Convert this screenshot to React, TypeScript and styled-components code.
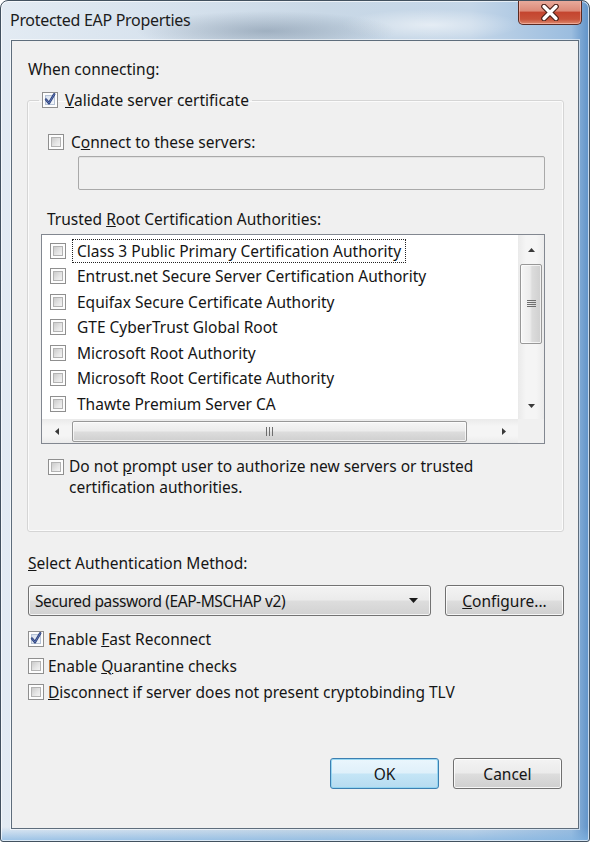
import React from "react";
import styled, { createGlobalStyle } from "styled-components";

const Global = createGlobalStyle`
  html, body { margin: 0; padding: 0; }
  body {
    width: 590px;
    height: 842px;
    overflow: hidden;
    background: #ffffff;
    font-family: "Noto Sans", "Open Sans", sans-serif;
  }
  * { box-sizing: border-box; }
`;

const FONT = `"Noto Sans", "Open Sans", "DejaVu Sans", sans-serif`;

const Window = styled.div`
  width: 590px;
  height: 842px;
  display: flex;
  flex-direction: column;
  border: 1px solid #42515f;
  border-radius: 8px 8px 3px 3px;
  box-shadow: inset 0 0 0 1px rgba(255, 255, 255, 0.65);
  background:
    radial-gradient(ellipse 130px 20px at 265px 30px, rgba(96, 116, 138, 0.42), transparent),
    radial-gradient(ellipse 90px 16px at 430px 24px, rgba(255, 255, 255, 0.55), transparent),
    linear-gradient(0deg, rgba(130, 180, 225, 0.75) 0, rgba(130, 180, 225, 0) 14px),
    linear-gradient(90deg, #e3ebf3 0%, #d8e3ee 25%, #c9d8e6 55%, #c4d6e8 80%, #9bbddf 97%, #5f92c8 100%);
  overflow: hidden;
`;

const TitleBar = styled.div`
  height: 39px;
  flex: none;
  display: flex;
  align-items: flex-start;
  justify-content: space-between;
`;

const Title = styled.div`
  margin: 9px 0 0 9px;
  font-family: ${FONT};
  font-size: 16px;
  line-height: 20px;
  color: #1c1c1c;
  letter-spacing: -0.3px;
`;

const CloseButton = styled.div`
  width: 64px;
  height: 25px;
  margin: -1px 7px 0 0;
  display: flex;
  align-items: center;
  justify-content: center;
  border: 1px solid #5b2a22;
  border-top: none;
  border-radius: 0 0 5px 5px;
  box-shadow: inset 0 0 0 1px rgba(255, 200, 190, 0.55);
  background: linear-gradient(180deg, #e9ad9f 0%, #dc8a78 45%, #c4452f 52%, #c8523a 80%, #dd8a6e 100%);
`;

const Client = styled.div`
  flex: 1;
  margin: 0 10px 12px 10px;
  border: 1px solid #5e6d7c;
  box-shadow: 0 0 0 1px rgba(255, 255, 255, 0.55);
  background: #f0f0f0;
  display: flex;
  flex-direction: column;
  font-family: ${FONT};
  font-size: 15.5px;
  color: #151515;
  letter-spacing: 0;
`;

const Label = styled.div<{ $left: number; $top: number }>`
  margin: ${(p) => p.$top}px 0 0 ${(p) => p.$left}px;
  line-height: 20px;
  height: 20px;
  white-space: nowrap;
`;

const Group = styled.fieldset`
  margin: 11px 0 0 15px;
  width: 537px;
  padding: 0 0 33px 0;
  border: 1px solid #d5d5d5;
  border-radius: 3px;
  box-shadow: inset 0 0 0 1px #fbfbfb;
  min-width: 0;
`;

const Legend = styled.legend`
  margin-left: 11px;
  padding: 0 3px;
  height: 20px;
  display: flex;
  align-items: center;
  gap: 7px;
  line-height: 20px;
  white-space: nowrap;
`;

const CheckRow = styled.div<{ $left: number; $top: number; $gap: number }>`
  margin: ${(p) => p.$top}px 0 0 ${(p) => p.$left}px;
  display: flex;
  align-items: center;
  gap: ${(p) => p.$gap}px;
  height: 20px;
  line-height: 20px;
  white-space: nowrap;
`;

const WrapRow = styled.div<{ $left: number; $top: number; $gap: number }>`
  margin: ${(p) => p.$top}px 0 0 ${(p) => p.$left}px;
  display: flex;
  align-items: flex-start;
  gap: ${(p) => p.$gap}px;
  line-height: 21px;
`;

const WrapText = styled.p`
  margin: 0;
  width: 440px;
`;

const BoxOuter = styled.div<{ $offset?: number }>`
  flex: none;
  width: 16px;
  height: 16px;
  margin-top: ${(p) => p.$offset ?? 0}px;
  border: 1px solid #8f8f8f;
  background: #fdfdfd;
  padding: 2px;
  display: flex;
`;

const BoxInner = styled.div<{ $checked?: boolean }>`
  flex: 1;
  border: 1px solid ${(p) => (p.$checked ? "#b5c2d6" : "#b3b3b3")};
  background: ${(p) =>
    p.$checked
      ? "linear-gradient(135deg, #d9e2ef 0%, #f3f6fa 100%)"
      : "linear-gradient(135deg, #cbcbcb 0%, #e6e6e6 60%, #f3f3f3 100%)"};
  position: relative;
`;

const CheckMark = styled.svg`
  position: absolute;
  left: -3px;
  top: -4px;
  width: 14px;
  height: 14px;
  overflow: visible;
`;

const CheckBox: React.FC<{ checked?: boolean; offset?: number }> = ({ checked, offset }) => (
  <BoxOuter $offset={offset}>
    <BoxInner $checked={checked}>
      {checked && (
        <CheckMark viewBox="0 0 14 14">
          <path d="M3 7.5 L6 11.2 L11.3 2.2" fill="none" stroke="#2c3f78" strokeWidth="2.4" strokeLinecap="round" strokeLinejoin="round" />
          <path d="M3 7.5 L6 11.2 L11.3 2.2" fill="none" stroke="#6079ba" strokeWidth="0.9" strokeLinecap="round" strokeLinejoin="round" />
        </CheckMark>
      )}
    </BoxInner>
  </BoxOuter>
);

const TextBox = styled.div`
  margin: 4px 0 0 50px;
  width: 467px;
  height: 34px;
  border: 1px solid #a9a9a9;
  border-radius: 2px;
  background: #f0f0f0;
  box-shadow: inset 0 1px 0 #e2e2e2;
`;

const ListBox = styled.div`
  margin: 5px 0 0 13px;
  width: 504px;
  height: 210px;
  border: 1px solid #828790;
  background: #ffffff;
  display: grid;
  grid-template-columns: 1fr 26px;
  grid-template-rows: 1fr 24px;
`;

const ListItems = styled.div`
  padding-top: 3px;
  overflow: hidden;
`;

const ListRow = styled.div`
  height: 25.5px;
  display: flex;
  align-items: center;
  padding-left: 8px;
  gap: 6px;
  white-space: nowrap;
`;

const ItemText = styled.span<{ $focus?: boolean }>`
  padding: 1px 4px;
  line-height: 20px;
  border: 1px dotted ${(p) => (p.$focus ? "#222" : "transparent")};
`;

const VScroll = styled.div`
  background: linear-gradient(90deg, #eaeaea 0%, #f5f5f5 30%, #f5f5f5 70%, #ebebeb 100%);
  display: flex;
  flex-direction: column;
  align-items: center;
`;

const HScroll = styled.div`
  background: linear-gradient(180deg, #eaeaea 0%, #f5f5f5 30%, #f5f5f5 70%, #ebebeb 100%);
  display: flex;
  align-items: center;
`;

const Corner = styled.div`
  background: #f0f0f0;
`;

const ArrowCell = styled.div<{ $size: number }>`
  flex: none;
  width: ${(p) => p.$size}px;
  height: ${(p) => p.$size}px;
  display: flex;
  align-items: center;
  justify-content: center;
`;

const Spacer = styled.div`
  flex: 1;
`;

const VThumb = styled.div`
  width: 22px;
  height: 80px;
  border: 1px solid #989898;
  border-radius: 2px;
  background: linear-gradient(90deg, #f6f6f6 0%, #ececec 45%, #dcdcdc 55%, #cfcfcf 100%);
  box-shadow: inset 0 0 0 1px rgba(255, 255, 255, 0.7);
  display: flex;
  align-items: center;
  justify-content: center;
`;

const HThumb = styled.div`
  height: 21px;
  width: 395px;
  border: 1px solid #989898;
  border-radius: 2px;
  background: linear-gradient(180deg, #f6f6f6 0%, #ececec 45%, #dcdcdc 55%, #cfcfcf 100%);
  box-shadow: inset 0 0 0 1px rgba(255, 255, 255, 0.7);
  display: flex;
  align-items: center;
  justify-content: center;
`;

const Arrow: React.FC<{ dir: "up" | "down" | "left" | "right" }> = ({ dir }) => {
  const pts = {
    up: "0,4 3.5,0 7,4",
    down: "0,0 3.5,4 7,0",
    left: "4,0 0,3.5 4,7",
    right: "0,0 4,3.5 0,7",
  }[dir];
  const vertical = dir === "up" || dir === "down";
  return (
    <svg width={vertical ? 7 : 4} height={vertical ? 4 : 7} viewBox={vertical ? "0 0 7 4" : "0 0 4 7"}>
      <polygon points={pts} fill="#3a3a3a" />
    </svg>
  );
};

const Grip: React.FC<{ vertical?: boolean }> = ({ vertical }) =>
  vertical ? (
    <svg width="9" height="8" viewBox="0 0 9 8">
      {[0.5, 2.5, 4.5, 6.5].map((y) => (
        <line key={y} x1="0" x2="9" y1={y} y2={y} stroke="#6e6e6e" strokeWidth="1" />
      ))}
    </svg>
  ) : (
    <svg width="8" height="9" viewBox="0 0 8 9">
      {[0.5, 3.5, 6.5].map((x) => (
        <line key={x} x1={x} x2={x} y1="0" y2="9" stroke="#6e6e6e" strokeWidth="1" />
      ))}
    </svg>
  );

const ControlRow = styled.div`
  margin: 12px 0 0 16px;
  display: flex;
  align-items: center;
  gap: 14px;
`;

const Combo = styled.div`
  width: 403px;
  height: 31px;
  border: 1px solid #737373;
  border-radius: 3px;
  box-shadow: inset 0 0 0 1px rgba(255, 255, 255, 0.75);
  background: linear-gradient(180deg, #f3f3f3 0%, #ebebeb 48%, #dddddd 52%, #d2d2d2 100%);
  display: flex;
  align-items: center;
  padding: 0 12px 0 6px;
  justify-content: space-between;
  white-space: nowrap;
`;

const ComboText = styled.span`
  letter-spacing: -0.4px;
`;

const Button = styled.div<{ $width: number; $default?: boolean }>`
  width: ${(p) => p.$width}px;
  height: 31px;
  border: 1px solid ${(p) => (p.$default ? "#3c7fb1" : "#707070")};
  border-radius: 3px;
  box-shadow: inset 0 0 0 1px ${(p) => (p.$default ? "rgba(140, 210, 240, 0.85)" : "rgba(255, 255, 255, 0.8)")};
  background: ${(p) =>
    p.$default
      ? "linear-gradient(180deg, #eaf6fd 0%, #dff0fa 48%, #c4e5f6 52%, #b6dbf0 100%)"
      : "linear-gradient(180deg, #f3f3f3 0%, #ebebeb 48%, #dddddd 52%, #cfcfcf 100%)"};
  display: flex;
  align-items: center;
  justify-content: center;
  white-space: nowrap;
`;

const OptionList = styled.div`
  margin: 13px 0 0 16px;
  display: flex;
  flex-direction: column;
  gap: 6.5px;
`;

const ButtonRow = styled.div`
  margin-top: auto;
  margin-bottom: 39px;
  margin-right: 16px;
  display: flex;
  justify-content: flex-end;
  gap: 14px;
`;

const OptionRow = styled.div`
  display: flex;
  align-items: center;
  gap: 4px;
  height: 20px;
  line-height: 20px;
  white-space: nowrap;
`;

const certs = [
  "Class 3 Public Primary Certification Authority",
  "Entrust.net Secure Server Certification Authority",
  "Equifax Secure Certificate Authority",
  "GTE CyberTrust Global Root",
  "Microsoft Root Authority",
  "Microsoft Root Certificate Authority",
  "Thawte Premium Server CA",
];

export default function App() {
  return (
    <>
      <Global />
      <Window>
        <TitleBar>
          <Title>Protected EAP Properties</Title>
          <CloseButton>
            <svg width="22" height="17" viewBox="0 0 22 17">
              <path d="M5 2.5 L17 14.5 M17 2.5 L5 14.5" stroke="#4a2018" strokeWidth="5.6" strokeLinecap="round" />
              <path d="M5 2.5 L17 14.5 M17 2.5 L5 14.5" stroke="#ffffff" strokeWidth="3.4" strokeLinecap="round" />
            </svg>
          </CloseButton>
        </TitleBar>
        <Client>
          <Label $left={16} $top={18}>When connecting:</Label>
          <Group>
            <Legend>
              <CheckBox checked />
              <span>
                <u>V</u>alidate server certificate
              </span>
            </Legend>
            <CheckRow $left={20} $top={22} $gap={7}>
              <CheckBox />
              <span>
                C<u>o</u>nnect to these servers:
              </span>
            </CheckRow>
            <TextBox />
            <Label $left={19} $top={19}>
              Trusted <u>R</u>oot Certification Authorities:
            </Label>
            <ListBox>
              <ListItems>
                {certs.map((c, i) => (
                  <ListRow key={c}>
                    <CheckBox />
                    <ItemText $focus={i === 0}>{c}</ItemText>
                  </ListRow>
                ))}
              </ListItems>
              <VScroll>
                <ArrowCell $size={29}>
                  <Arrow dir="up" />
                </ArrowCell>
                <VThumb>
                  <Grip vertical />
                </VThumb>
                <Spacer />
                <ArrowCell $size={26}>
                  <Arrow dir="down" />
                </ArrowCell>
              </VScroll>
              <HScroll>
                <ArrowCell $size={30}>
                  <Arrow dir="left" />
                </ArrowCell>
                <HThumb>
                  <Grip />
                </HThumb>
                <Spacer />
                <ArrowCell $size={28}>
                  <Arrow dir="right" />
                </ArrowCell>
              </HScroll>
              <Corner />
            </ListBox>
            <WrapRow $left={20} $top={12} $gap={5}>
              <CheckBox offset={3} />
              <WrapText>
                Do not <u>p</u>rompt user to authorize new servers or trusted
                <br />
                certification authorities.
              </WrapText>
            </WrapRow>
          </Group>
          <Label $left={16} $top={21}>
            <u>S</u>elect Authentication Method:
          </Label>
          <ControlRow>
            <Combo>
              <ComboText>Secured password (EAP-MSCHAP v2)</ComboText>
              <svg width="9" height="5" viewBox="0 0 9 5">
                <polygon points="0,0 9,0 4.5,5" fill="#1a1a1a" />
              </svg>
            </Combo>
            <Button $width={119}>
              <span>
                <u>C</u>onfigure...
              </span>
            </Button>
          </ControlRow>
          <OptionList>
            <OptionRow>
              <CheckBox checked />
              <span>
                Enable <u>F</u>ast Reconnect
              </span>
            </OptionRow>
            <OptionRow>
              <CheckBox />
              <span>
                Enable <u>Q</u>uarantine checks
              </span>
            </OptionRow>
            <OptionRow>
              <CheckBox />
              <span>
                <u>D</u>isconnect if server does not present cryptobinding TLV
              </span>
            </OptionRow>
          </OptionList>
          <ButtonRow>
            <Button $width={109} $default>
              OK
            </Button>
            <Button $width={109}>Cancel</Button>
          </ButtonRow>
        </Client>
      </Window>
    </>
  );
}
